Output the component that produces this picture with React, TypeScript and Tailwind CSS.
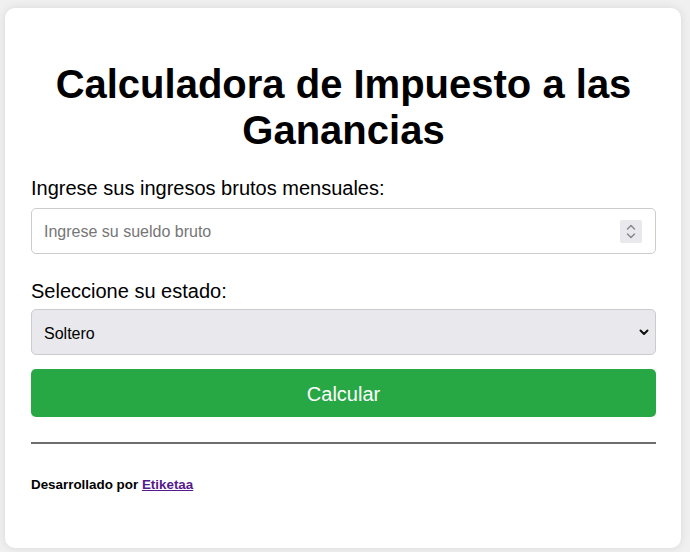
import React from "react";

export default function App() {
  return (
    <div className="w-[690px] h-[552px] bg-[#f0f0f0] pt-[8px] pl-[5px] overflow-hidden" style={{ fontFamily: '"Liberation Sans", Arial, sans-serif' }}>
      <div className="w-[676px] h-[540px] bg-white rounded-[10px] shadow-[0_0_10px_rgba(0,0,0,0.1)] pl-[26px] pr-[25px] pt-[53px] flex flex-col">
        {/* Title */}
        <h1 className="text-[40px] leading-[46px] font-bold text-black text-center">
          Calculadora de Impuesto a las Ganancias
        </h1>

        {/* Income */}
        <label className="mt-[24px] text-[20px] leading-[23px] text-black">
          Ingrese sus ingresos brutos mensuales:
        </label>
        <div className="relative mt-[8px]">
          <input
            type="text"
            placeholder="Ingrese su sueldo bruto"
            className="w-full h-[46px] border border-[#cccccc] rounded-[5px] pl-[12px] pt-[2px] text-[16px] text-black placeholder:text-[#767676] outline-none"
          />
          <div className="absolute right-[14px] top-[12px] w-[22px] h-[23px] bg-[#e9e9ed] rounded-[2px] flex flex-col items-center justify-center gap-[3px]">
            <svg width="10" height="6" viewBox="0 0 10 6" fill="none" stroke="#8a8a8e" strokeWidth="1.5" strokeLinecap="round" strokeLinejoin="round" aria-hidden="true">
              <polyline points="1.5 5 5 1.5 8.5 5" />
            </svg>
            <svg width="10" height="6" viewBox="0 0 10 6" fill="none" stroke="#8a8a8e" strokeWidth="1.5" strokeLinecap="round" strokeLinejoin="round" aria-hidden="true">
              <polyline points="1.5 1 5 4.5 8.5 1" />
            </svg>
          </div>
        </div>

        {/* Status */}
        <label className="mt-[26px] text-[20px] leading-[23px] text-black">
          Seleccione su estado:
        </label>
        <div className="relative mt-[6px]">
          <select className="appearance-none w-full h-[46px] bg-[#e9e9ed] border border-[#cccccc] rounded-[5px] pl-[12px] pt-[3px] text-[16px] text-black outline-none">
            <option>Soltero</option>
            <option>Casado</option>
          </select>
          <svg className="absolute right-[7px] top-[20px] pointer-events-none" width="10" height="7" viewBox="0 0 10 7" fill="none" stroke="#111" strokeWidth="2" strokeLinecap="round" strokeLinejoin="round" aria-hidden="true">
            <polyline points="1.5 1.5 5 5 8.5 1.5" />
          </svg>
        </div>

        <button className="mt-[14px] h-[48px] w-full bg-[#28a745] text-white text-[20px] pt-[2px] rounded-[5px]">
          Calcular
        </button>

        <div className="mt-[25px] h-[2px] bg-[#6d6d6d]" />

        <p className="mt-[31px] text-[13.4px] font-bold text-black">
          Desarrollado por{" "}
          <a href="#" className="text-[#551a8b] underline">
            Etiketaa
          </a>
        </p>
      </div>
    </div>
  );
}
